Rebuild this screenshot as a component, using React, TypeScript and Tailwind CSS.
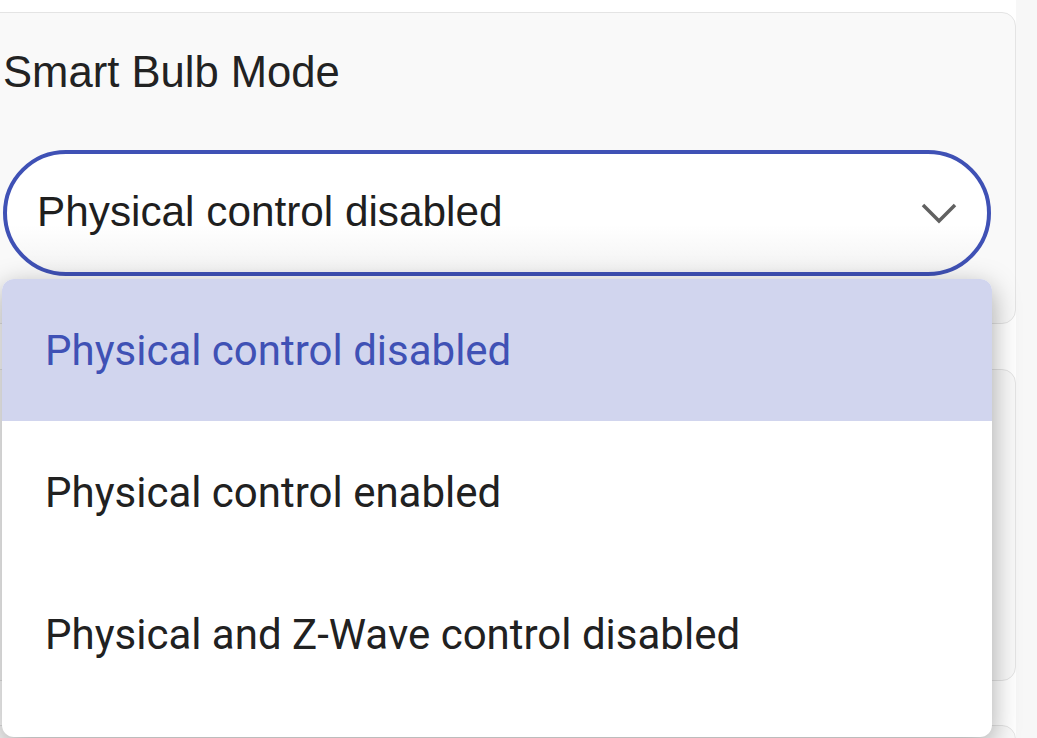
import React from "react";

const options = [
  "Physical control disabled",
  "Physical control enabled",
  "Physical and Z-Wave control disabled",
];

function Chevron() {
  return (
    <svg width="36" height="22" viewBox="0 0 36 22" fill="none" aria-hidden="true">
      <path d="M2 3 L18 19 L34 3" stroke="#616161" strokeWidth="3.5" strokeLinecap="butt" strokeLinejoin="miter" />
    </svg>
  );
}

export default function App() {
  const selected = 0;

  return (
    <div className="relative flex h-[738px] w-[1037px] overflow-hidden bg-white font-['Roboto',sans-serif]">
      <div className="flex w-[1016px] flex-col pt-[12px]">
        <section className="ml-[-20px] h-[312px] shrink-0 rounded-r-[14px] border border-[#e4e4e4] bg-[#f9f9f9] pl-[22px] pt-[38px]">
          <h2 className="font-['Liberation_Sans',Arial,sans-serif] text-[43.6px] leading-none text-[#222]">
            Smart Bulb Mode
          </h2>
          <button
            type="button"
            className="mt-[55px] flex h-[126px] w-[988px] items-center justify-between rounded-full border-4 border-[#3f51b5] bg-gradient-to-b from-white from-60% to-[#f3f3f3] pl-[30px] pr-[30px] text-left"
          >
            <span className="font-['Liberation_Sans',Arial,sans-serif] text-[42.3px] leading-none text-[#1f1f1f]">
              Physical control disabled
            </span>
            <Chevron />
          </button>
        </section>
        <section className="ml-[-20px] mt-[45px] h-[312px] shrink-0 rounded-r-[14px] border border-[#e4e4e4] bg-[#f9f9f9]" />
        <section className="ml-[-20px] mt-[44px] h-[312px] shrink-0 rounded-r-[14px] border border-[#e4e4e4] bg-[#f9f9f9]" />
      </div>
      <div className="flex-1 bg-[#f7f7f7]" />

      <ul className="absolute left-[2px] top-[279px] w-[990px] overflow-hidden rounded-[12px] bg-white pb-[32px] shadow-[0_8px_28px_rgba(0,0,0,0.35)]">
        {options.map((opt, i) => (
          <li
            key={opt}
            className={
              i === selected
                ? "flex h-[142px] items-center bg-[#d1d5ee] pl-[43px] text-[42px] text-[#3f51b5]"
                : "flex h-[142px] items-center pl-[43px] text-[42px] text-[#212121]"
            }
          >
            {opt}
          </li>
        ))}
      </ul>
    </div>
  );
}
